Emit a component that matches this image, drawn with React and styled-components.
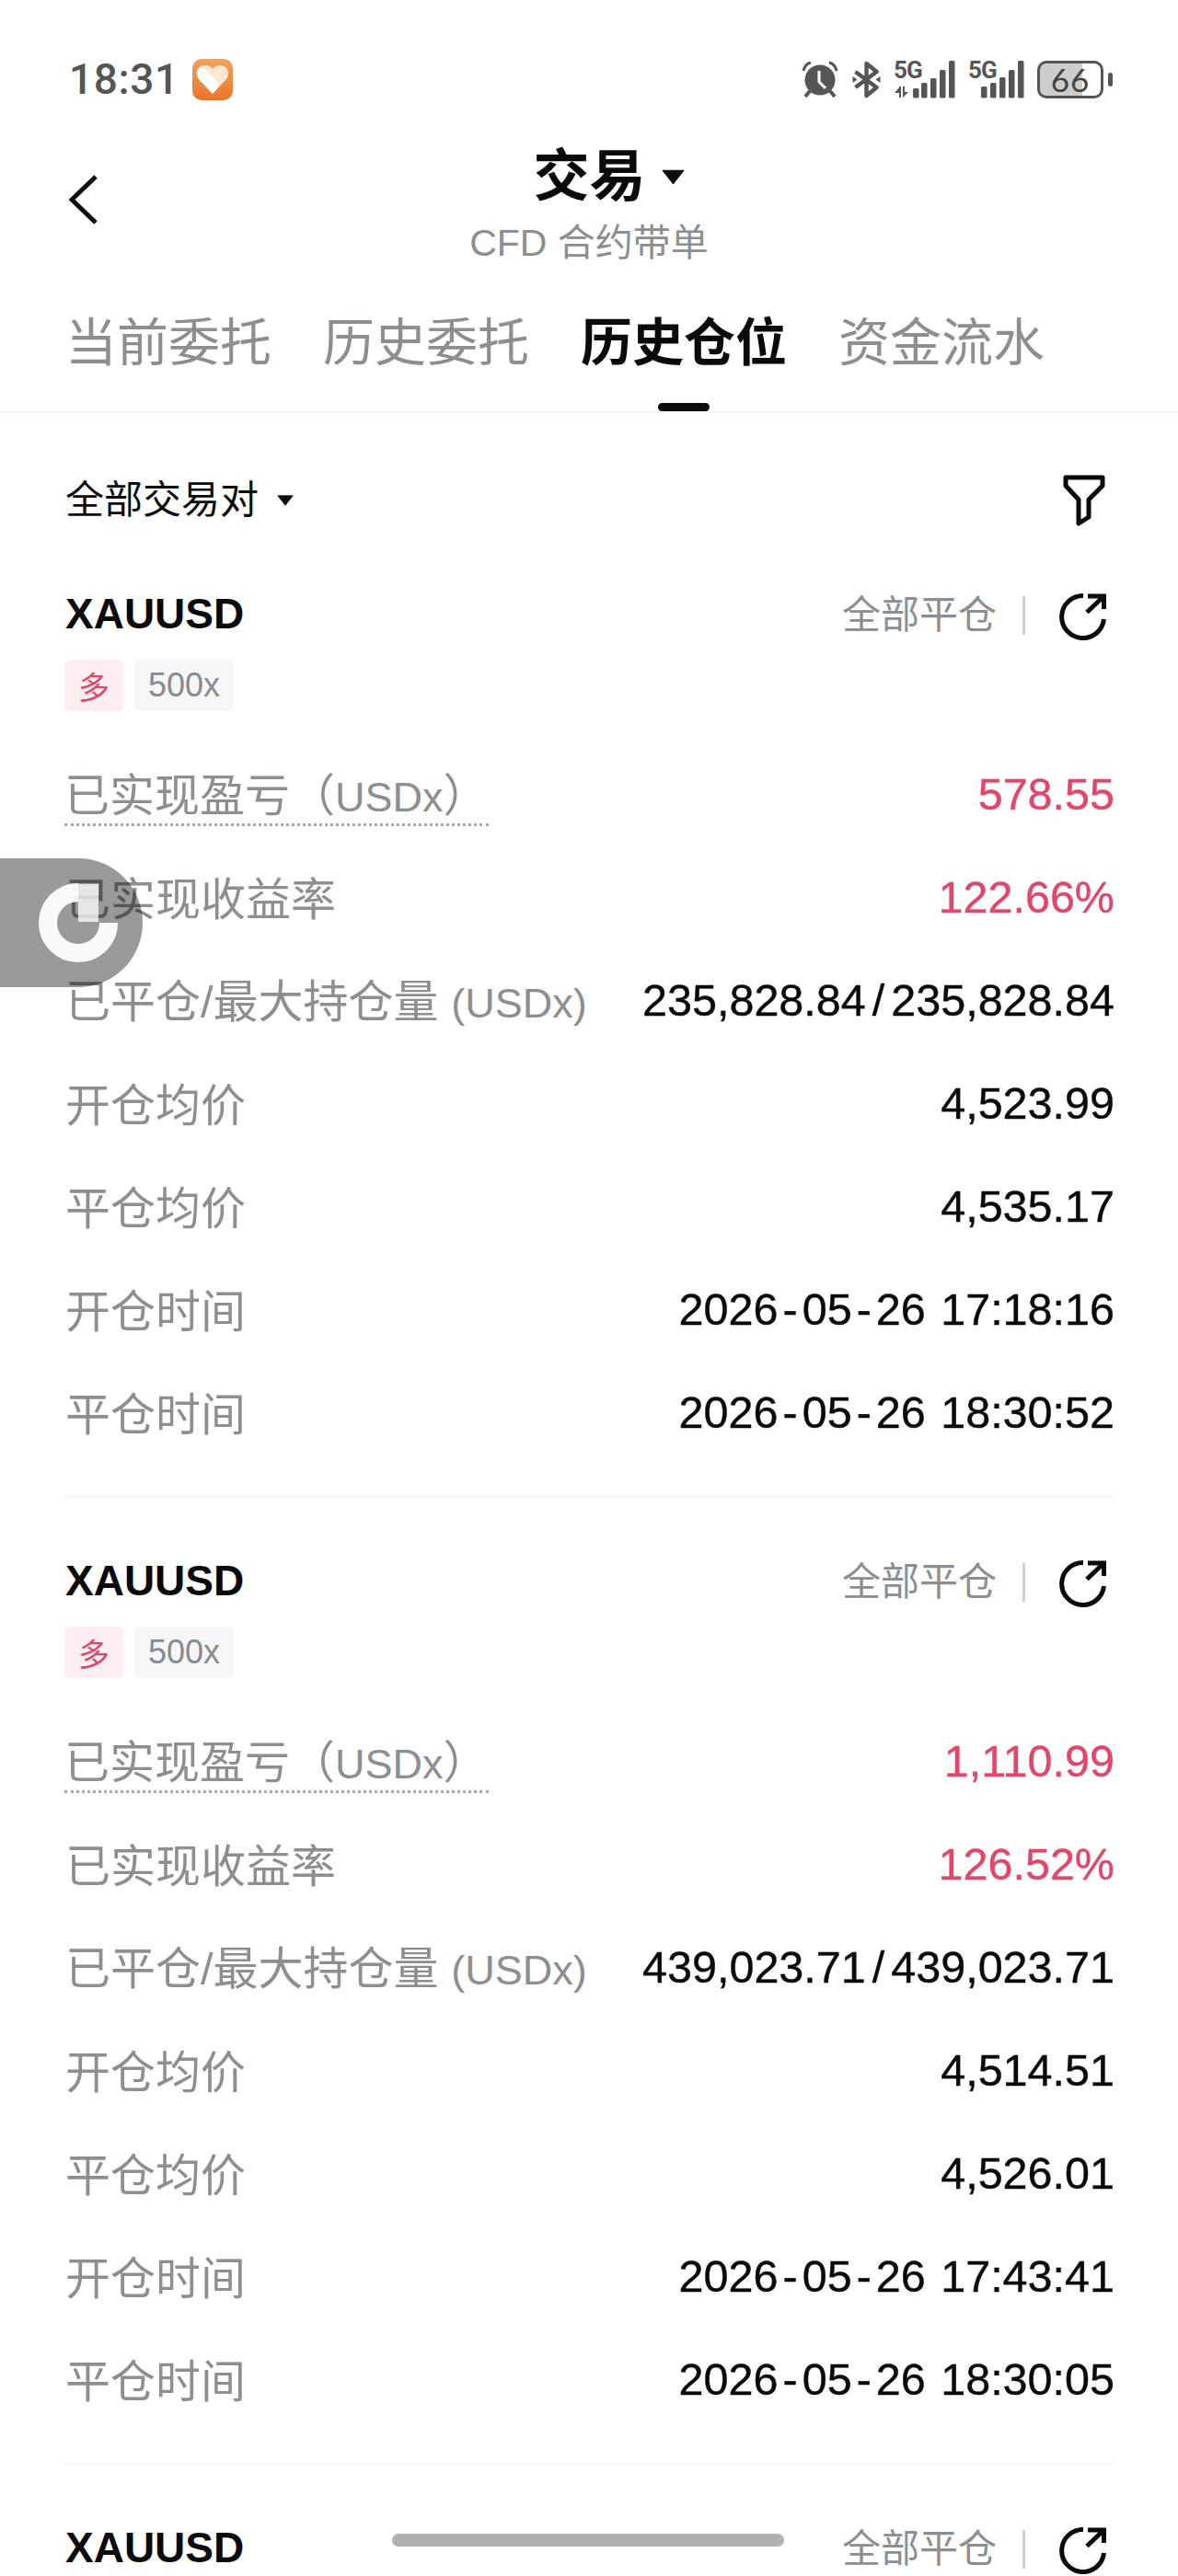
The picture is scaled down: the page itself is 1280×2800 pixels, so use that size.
import React from "react";
import styled, { createGlobalStyle } from "styled-components";

const GlobalStyle = createGlobalStyle`
  html, body {
    margin: 0;
    padding: 0;
    background: #fff;
  }
  * {
    box-sizing: border-box;
  }
`;

const Page = styled.div`
  position: relative;
  width: 1280px;
  height: 2800px;
  overflow: hidden;
  background: #fff;
  color: #0a0a0a;
  font-family: "Liberation Sans", "Noto Sans CJK SC", sans-serif;
`;

const StatusBar = styled.div`
  display: flex;
  justify-content: space-between;
  align-items: center;
  height: 108px;
  padding: 64px 71px 0 75px;
`;

const StatusLeft = styled.div`
  display: flex;
  align-items: center;
  gap: 14px;
`;

const Clock = styled.span`
  font-family: Roboto, sans-serif;
  font-size: 46px;
  font-weight: 500;
  letter-spacing: 0.6px;
  line-height: 46px;
  color: #555;
`;

const StatusRight = styled.div`
  display: flex;
  align-items: center;
  gap: 14px;
  svg {
    display: block;
  }
`;

const SignalBox = styled.div`
  display: grid;
  width: ${(p) => p.$width}px;
  height: 41px;
  > * {
    grid-area: 1 / 1;
  }
`;

const NetworkLabel = styled.span`
  font-family: Roboto, sans-serif;
  font-size: 26px;
  font-weight: 700;
  letter-spacing: -1px;
  line-height: 20px;
  height: 20px;
  color: #555;
`;

const BatteryBody = styled.div`
  position: relative;
  display: flex;
  align-items: center;
  justify-content: center;
  width: 72px;
  height: 41px;
  margin-right: 10px;
  border: 3px solid #555;
  border-radius: 10px;
  background: linear-gradient(90deg, #cdcdcd 70%, #fff 70%);
  font-family: Lato, sans-serif;
  font-size: 35px;
  letter-spacing: 1px;
  line-height: 35px;
  color: #444;
  &::after {
    content: "";
    position: absolute;
    right: -13px;
    top: 10px;
    width: 5px;
    height: 15px;
    border-radius: 3px;
    background: #555;
  }
`;

const Header = styled.div`
  position: relative;
  height: 184px;
  padding-top: 44px;
  text-align: center;
`;

const BackButton = styled.svg`
  position: absolute;
  left: 75px;
  top: 82px;
`;

const TitleRow = styled.div`
  display: flex;
  justify-content: center;
  align-items: center;
  gap: 17px;
  padding-left: 43px;
  height: 80px;
`;

const Title = styled.span`
  font-size: 61px;
  font-weight: 700;
  line-height: 80px;
`;

const SubTitle = styled.div`
  padding-top: 2px;
  font-size: 41px;
  line-height: 60px;
  color: #8c8f91;
`;

const Tabs = styled.div`
  display: flex;
  gap: 56px;
  height: 157px;
  padding: 0 0 0 71px;
  border-bottom: 2px solid #f3f3f3;
`;

const Tab = styled.div`
  position: relative;
  height: 155px;
  padding-top: 47px;
  font-size: 56px;
  line-height: 68px;
  font-weight: ${(p) => (p.$active ? 700 : 400)};
  color: ${(p) => (p.$active ? "#0a0a0a" : "#8c8f91")};
  &::after {
    content: "";
    display: ${(p) => (p.$active ? "block" : "none")};
    position: absolute;
    left: 50%;
    bottom: 0;
    width: 56px;
    height: 9px;
    margin-left: -28px;
    border-radius: 5px;
    background: #0a0a0a;
  }
`;

const FilterBar = styled.div`
  display: flex;
  justify-content: space-between;
  align-items: center;
  height: 188px;
  padding: 2px 78px 0 71px;
`;

const PairSelect = styled.div`
  display: flex;
  align-items: center;
  gap: 20px;
  font-size: 42px;
  line-height: 60px;
`;

const Card = styled.div`
  margin: 0 69px 0 70px;
  padding-bottom: 34px;
  border-bottom: 2px solid #f6f6f6;
  & + & {
    margin-top: 60px;
  }
`;

const CardHead = styled.div`
  display: flex;
  justify-content: space-between;
  align-items: center;
  height: 60px;
`;

const Symbol = styled.div`
  font-size: 46px;
  font-weight: 700;
  line-height: 60px;
  padding-left: 1px;
`;

const CardActions = styled.div`
  display: flex;
  align-items: center;
  margin-right: 8px;
  svg {
    position: relative;
    top: 3px;
  }
`;

const CloseAll = styled.span`
  padding-top: 3px;
  font-size: 42px;
  line-height: 60px;
  color: #8c8f91;
`;

const Separator = styled.span`
  width: 3px;
  height: 42px;
  margin: 3px 37px 0 28px;
  background: #cfcfcf;
`;

const Tags = styled.div`
  display: flex;
  gap: 12px;
  margin-top: 20px;
  margin-bottom: 35px;
`;

const Tag = styled.span`
  display: flex;
  align-items: center;
  justify-content: center;
  height: 56px;
  padding: 0 15px;
  border-radius: 6px;
  font-size: ${(p) => (p.$long ? "34px" : "36px")};
  background: ${(p) => (p.$long ? "#fdeef1" : "#f5f6f7")};
  color: ${(p) => (p.$long ? "#e0476a" : "#888b8d")};
`;

const Row = styled.div`
  display: flex;
  justify-content: space-between;
  align-items: center;
  height: 112px;
`;

const Label = styled.span`
  padding: 4px 0 0 1px;
  font-size: 49px;
  line-height: 60px;
  color: #8c8f91;
  white-space: nowrap;
  ${(p) =>
    p.$dotted &&
    `
    padding-left: 0;
    line-height: 56px;
    margin-bottom: -3px;
    border-bottom: 3px dotted #a8a8a8;
  `}
`;

const LabelUnit = styled.span`
  font-size: 45px;
`;

const Value = styled.span`
  padding-bottom: 3px;
  font-size: 48.5px;
  line-height: 60px;
  word-spacing: 3px;
  white-space: nowrap;
  -webkit-text-stroke: 0.4px currentColor;
  color: ${(p) => (p.$profit ? "#e0476a" : "#0a0a0a")};
`;

const WideGlyph = styled.span`
  margin: 0 ${(p) => (p.$slash ? "7px" : "5px")};
`;

const FloatingBall = styled.div`
  position: absolute;
  left: 0;
  top: 933px;
  display: flex;
  align-items: center;
  width: 155px;
  height: 140px;
  padding-left: 42px;
  border-radius: 0 70px 70px 0;
  background: rgba(0, 0, 0, 0.4);
`;

const HomeIndicator = styled.div`
  position: absolute;
  left: 426px;
  top: 2754px;
  width: 426px;
  height: 14px;
  border-radius: 7px;
  background: #b0b0b0;
`;

const HeartBadge = () => (
  <svg width="44" height="45" viewBox="0 0 44 45">
    <defs>
      <linearGradient id="badgeBg" x1="0" y1="0" x2="0" y2="1">
        <stop offset="0" stopColor="#f0a35c" />
        <stop offset="1" stopColor="#ea762a" />
      </linearGradient>
    </defs>
    <rect width="44" height="45" rx="10" fill="url(#badgeBg)" />
    <path
      d="M22 38 L7 22 C2 15 6 7 14 7 C18 7 21 9 22 11 C23 9 26 7 30 7 C38 7 42 15 37 22 Z"
      fill="#fbe6d4"
    />
    <path d="M22 38 L7 22 C4 17 6 10 12 9 L30 28 Z" fill="#fff" />
  </svg>
);

const AlarmIcon = () => (
  <svg width="42" height="41" viewBox="0 0 40 41">
    <circle cx="20" cy="21" r="16.5" fill="#555" />
    <path d="M2 11 C3 6 6 3 10 2" fill="none" stroke="#555" strokeWidth="3" />
    <path d="M38 11 C37 6 34 3 30 2" fill="none" stroke="#555" strokeWidth="3" />
    <path d="M9 33 L4 39 M31 33 L36 39" stroke="#555" strokeWidth="4" />
    <path d="M19 11 V23 L26 30" fill="none" stroke="#fff" strokeWidth="3" />
  </svg>
);

const BluetoothIcon = () => (
  <svg width="31" height="41" viewBox="0 0 30 41">
    <path
      d="M3 12 L26 29 L15 38 V3 L26 12 L3 29"
      fill="none"
      stroke="#555"
      strokeWidth="4.5"
      strokeLinejoin="round"
    />
    <path d="M0 17 L5 20.5 L0 24 Z M30 17 L25 20.5 L30 24 Z" fill="#555" />
  </svg>
);

const BARS_TRAFFIC = [
  [21, 96],
  [30, 90],
  [40, 85],
  [50, 76],
  [60, 66],
];

const BARS_PLAIN = [
  [14, 94],
  [24, 90],
  [34, 84],
  [44, 76],
  [54, 66],
];

const SignalIcon = ({ traffic }) => {
  const bars = traffic ? BARS_TRAFFIC : BARS_PLAIN;
  const width = traffic ? 67 : 61;
  return (
    <SignalBox $width={width}>
      <NetworkLabel>5G</NetworkLabel>
      <svg width={width} height="41" viewBox={`0 66 ${width} 41`}>
        {traffic && (
          <path d="M6 94 V106 H8 V94 Z M1 101 L6 95 V101 Z M10 94 V106 L16 100 H12 V94 Z" fill="#555" />
        )}
        {bars.map(([x, y]) => (
          <rect key={x} x={x} y={y} width="6.5" height={106.5 - y} rx="1.5" fill="#555" />
        ))}
      </svg>
    </SignalBox>
  );
};

const TriangleDown = ({ width, height }) => (
  <svg width={width} height={height} viewBox="0 0 24 16">
    <path d="M1 1 H23 L12 15 Z" fill="#0a0a0a" stroke="#0a0a0a" strokeLinejoin="round" />
  </svg>
);

const FunnelIcon = () => (
  <svg width="48" height="56" viewBox="0 0 48 56">
    <path
      d="M4 3 H44 V12 L29 27 V46 L18 53 V27 L4 12 Z"
      fill="none"
      stroke="#0a0a0a"
      strokeWidth="5"
      strokeLinejoin="round"
    />
  </svg>
);

const ShareIcon = () => (
  <svg width="52" height="52" viewBox="0 0 52 52">
    <path
      d="M26 3.5 A23 23 0 1 0 48.5 29"
      fill="none"
      stroke="#0a0a0a"
      strokeWidth="5"
    />
    <path d="M31 4 H48.5 V18" fill="none" stroke="#0a0a0a" strokeWidth="5" />
    <path d="M47.5 5 L30 21.5" fill="none" stroke="#0a0a0a" strokeWidth="5" />
  </svg>
);

const BallMark = () => (
  <svg width="86" height="86" viewBox="0 0 86 86" opacity="0.95">
    <path
      d="M43 10 A33 33 0 1 0 76 43"
      fill="none"
      stroke="#fff"
      strokeWidth="20"
    />
    <rect x="43" y="1" width="22" height="41" fill="#fff" opacity="0.8" />
  </svg>
);

const TABS = ["当前委托", "历史委托", "历史仓位", "资金流水"];

const POSITIONS = [
  {
    pnl: "578.55",
    rate: "122.66%",
    size: "235,828.84/235,828.84",
    openPrice: "4,523.99",
    closePrice: "4,535.17",
    openTime: "2026-05-26 17:18:16",
    closeTime: "2026-05-26 18:30:52",
  },
  {
    pnl: "1,110.99",
    rate: "126.52%",
    size: "439,023.71/439,023.71",
    openPrice: "4,514.51",
    closePrice: "4,526.01",
    openTime: "2026-05-26 17:43:41",
    closeTime: "2026-05-26 18:30:05",
  },
];

// hyphens and slashes sit wider in the app's number font
const spaced = (text) =>
  text.split(/([-/])/).map((part, i) =>
    part === "-" || part === "/" ? (
      <WideGlyph key={i} $slash={part === "/"}>
        {part}
      </WideGlyph>
    ) : (
      part
    )
  );

const CardHeader = () => (
  <CardHead>
    <Symbol>XAUUSD</Symbol>
    <CardActions>
      <CloseAll>全部平仓</CloseAll>
      <Separator />
      <ShareIcon />
    </CardActions>
  </CardHead>
);

const PositionCard = ({ item }) => (
  <Card>
    <CardHeader />
    <Tags>
      <Tag $long>多</Tag>
      <Tag>500x</Tag>
    </Tags>
    <Row>
      <Label $dotted>
        已实现盈亏（<LabelUnit>USDx</LabelUnit>）
      </Label>
      <Value $profit>{item.pnl}</Value>
    </Row>
    <Row>
      <Label>已实现收益率</Label>
      <Value $profit>{item.rate}</Value>
    </Row>
    <Row>
      <Label>
        已平仓/最大持仓量 <LabelUnit>(USDx)</LabelUnit>
      </Label>
      <Value>{spaced(item.size)}</Value>
    </Row>
    <Row>
      <Label>开仓均价</Label>
      <Value>{item.openPrice}</Value>
    </Row>
    <Row>
      <Label>平仓均价</Label>
      <Value>{item.closePrice}</Value>
    </Row>
    <Row>
      <Label>开仓时间</Label>
      <Value>{spaced(item.openTime)}</Value>
    </Row>
    <Row>
      <Label>平仓时间</Label>
      <Value>{spaced(item.closeTime)}</Value>
    </Row>
  </Card>
);

const App = () => (
  <Page>
    <GlobalStyle />
    <StatusBar>
      <StatusLeft>
        <Clock>18:31</Clock>
        <HeartBadge />
      </StatusLeft>
      <StatusRight>
        <AlarmIcon />
        <BluetoothIcon />
        <SignalIcon traffic />
        <SignalIcon />
        <BatteryBody>66</BatteryBody>
      </StatusRight>
    </StatusBar>
    <Header>
      <BackButton width="32" height="54" viewBox="0 0 32 54">
        <polyline points="29,2 3,27 29,52" fill="none" stroke="#0a0a0a" strokeWidth="5" />
      </BackButton>
      <TitleRow>
        <Title>交易</Title>
        <TriangleDown width="25" height="17" />
      </TitleRow>
      <SubTitle>CFD 合约带单</SubTitle>
    </Header>
    <Tabs>
      {TABS.map((name) => (
        <Tab key={name} $active={name === "历史仓位"}>
          {name}
        </Tab>
      ))}
    </Tabs>
    <FilterBar>
      <PairSelect>
        全部交易对
        <TriangleDown width="18" height="12" />
      </PairSelect>
      <FunnelIcon />
    </FilterBar>
    {POSITIONS.map((item) => (
      <PositionCard key={item.pnl} item={item} />
    ))}
    <Card>
      <CardHeader />
    </Card>
    <FloatingBall>
      <BallMark />
    </FloatingBall>
    <HomeIndicator />
  </Page>
);

export default App;
